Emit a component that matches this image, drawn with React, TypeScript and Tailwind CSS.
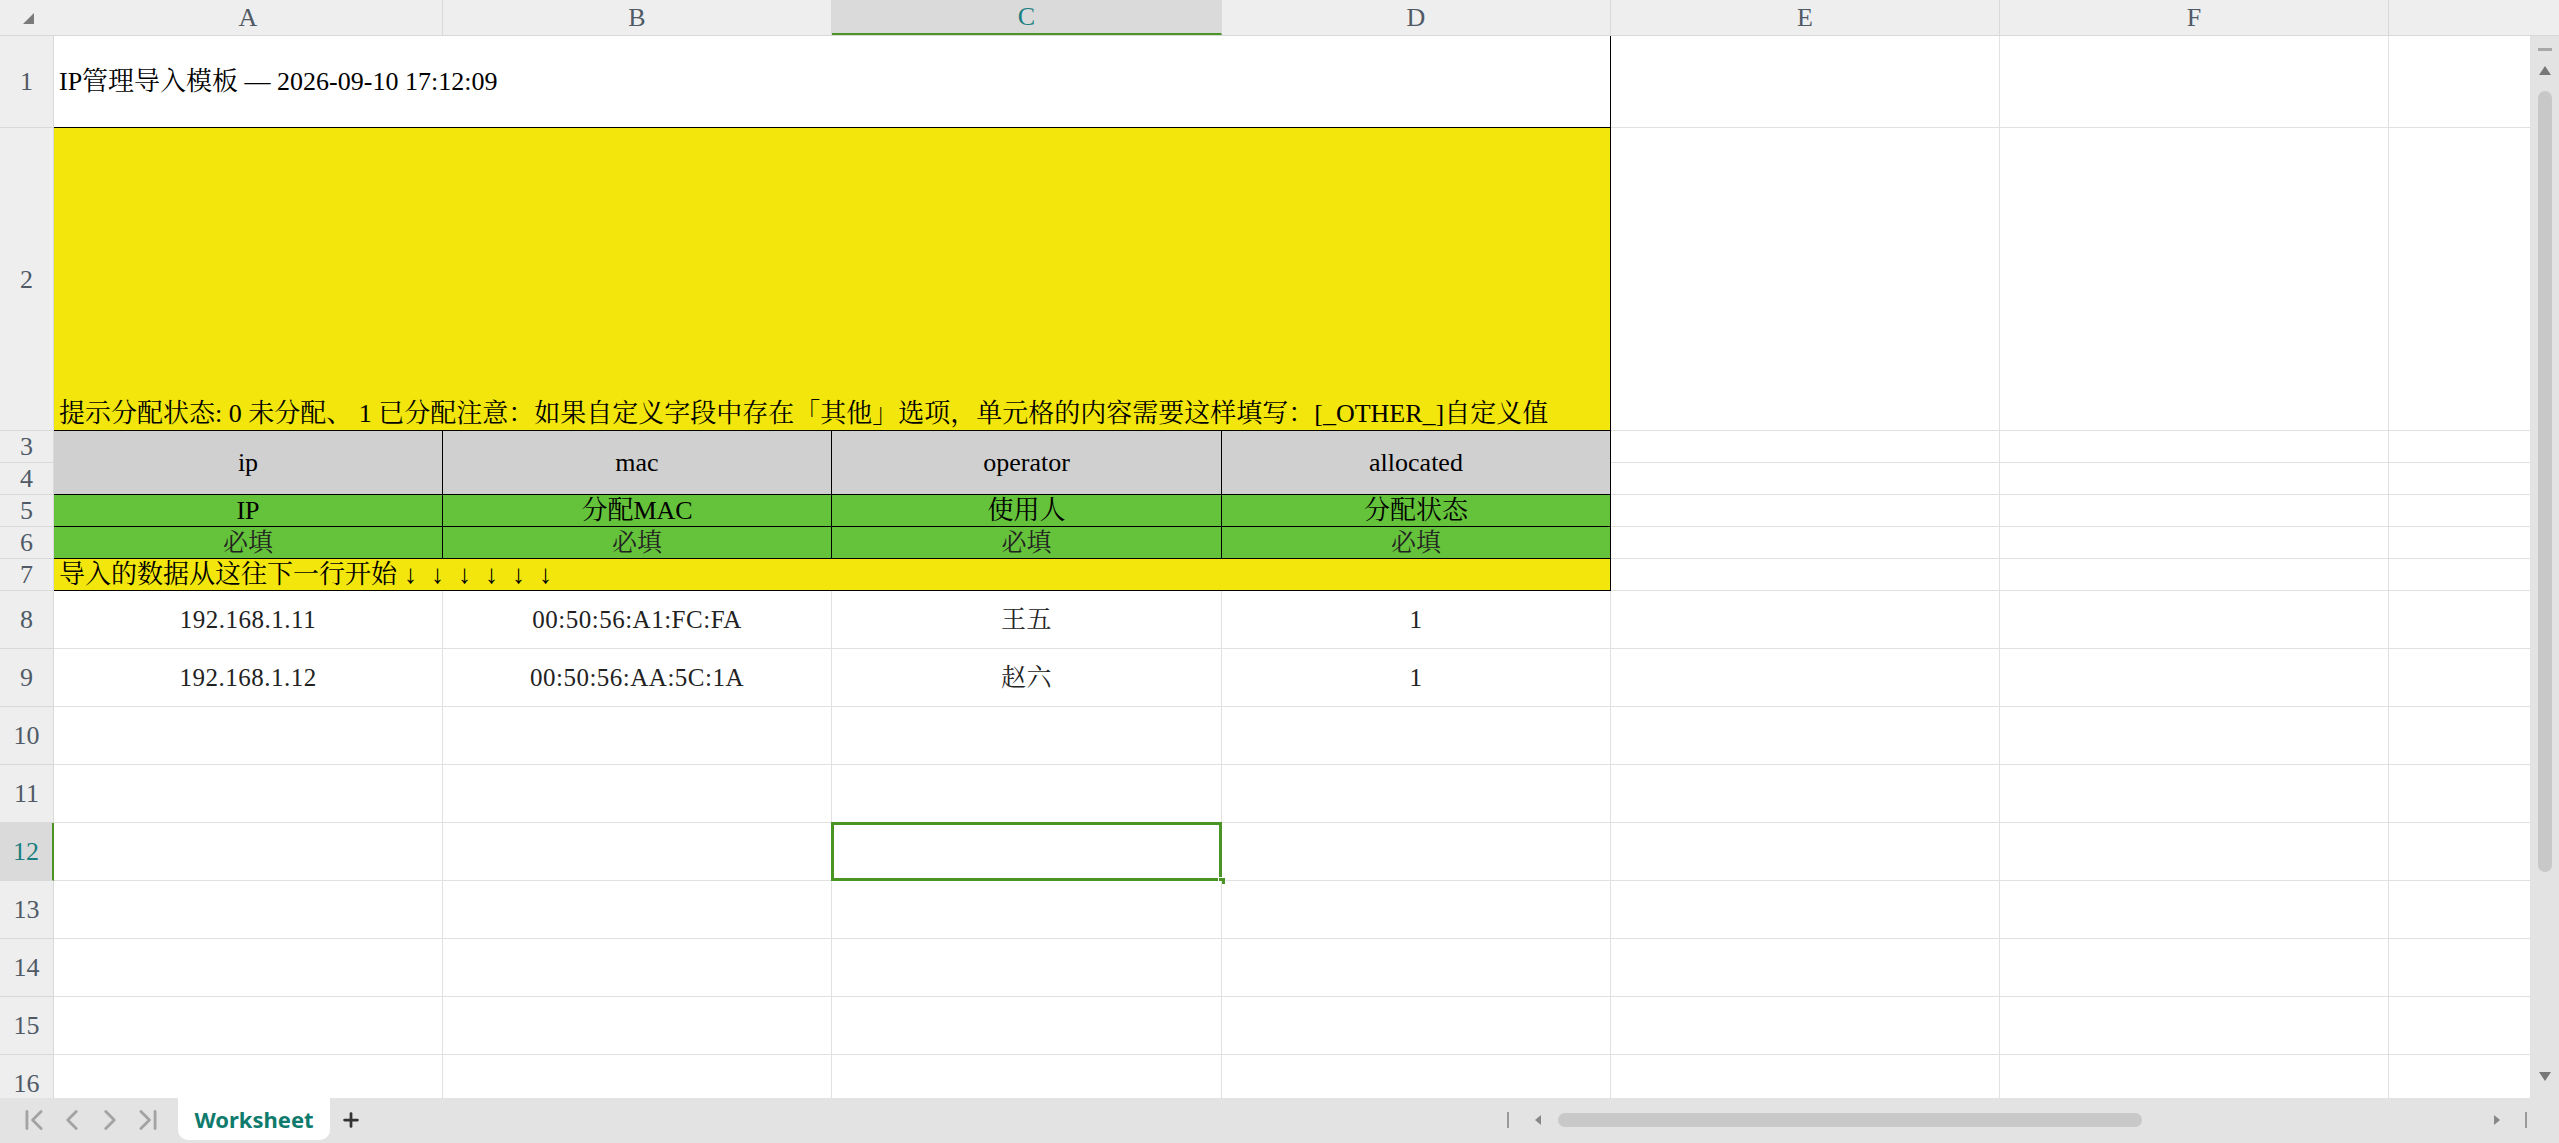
import { ChevronFirst, ChevronLast, ChevronLeft, ChevronRight, Plus } from "lucide-react";

const grid = "border-r border-b border-[#e1e1e1] bg-white";
const blk = "border-r border-b border-black";
const rowHead = "border-r border-b border-[#d9d9d9] bg-[#eeeeee] flex items-center justify-center text-[26px] text-[#505a66]";

const cols = [
  { label: "A", w: "w-[389px]" },
  { label: "B", w: "w-[389px]" },
  { label: "C", w: "w-[390px]", active: true },
  { label: "D", w: "w-[389px]" },
  { label: "E", w: "w-[389px]" },
  { label: "F", w: "w-[389px]" },
];

const fields = [
  { key: "ip", name: "IP" },
  { key: "mac", name: "分配MAC" },
  { key: "operator", name: "使用人" },
  { key: "allocated", name: "分配状态" },
];

const rows = [
  ["192.168.1.11", "00:50:56:A1:FC:FA", "王五", "1"],
  ["192.168.1.12", "00:50:56:AA:5C:1A", "赵六", "1"],
];

function Empty({ n }: { n: number }) {
  return (
    <>
      {Array.from({ length: n }).map((_, i) => (
        <div key={i} className={grid} />
      ))}
    </>
  );
}

function RowNo({ n, active }: { n: number; active?: boolean }) {
  if (active) {
    return (
      <div className="border-r-2 border-b border-r-[#4a9325] border-b-[#d9d9d9] bg-[#dadada] flex items-center justify-center text-[26px] text-[#1a7f80]">
        {n}
      </div>
    );
  }
  return <div className={rowHead}>{n}</div>;
}

export default function App() {
  return (
    <div className="w-[2559px] h-[1143px] overflow-hidden flex flex-col bg-white font-['Liberation_Serif','Noto_Serif_CJK_SC','Noto_Sans_CJK_SC',serif] text-black">
      {/* column headers */}
      <div className="h-[36px] flex bg-[#eeeeee] border-b border-[#d9d9d9] shrink-0">
        <div className="w-[54px] shrink-0 pt-[13px] pl-[23px]">
          <svg width="11" height="11" viewBox="0 0 10 10">
            <polygon points="10,0 10,10 0,10" fill="#7a7a7a" />
          </svg>
        </div>
        {cols.map((c) => (
          <div
            key={c.label}
            className={
              c.active
                ? `${c.w} shrink-0 bg-[#dadada] border-r border-r-[#d9d9d9] border-b-2 border-b-[#4a9325] flex items-center justify-center text-[26px] text-[#1a7f80]`
                : `${c.w} shrink-0 border-r border-[#d9d9d9] flex items-center justify-center text-[26px] text-[#505a66]`
            }
          >
            {c.label}
          </div>
        ))}
        <div className="w-[142px] shrink-0" />
        <div className="flex-1" />
      </div>

      {/* body */}
      <div className="h-[1062px] flex shrink-0">
        <div className="w-[2531px] h-full overflow-hidden">
          <div className="grid grid-cols-[54px_389px_389px_390px_389px_389px_389px_142px] grid-rows-[92px_303px_32px_32px_32px_32px_32px_58px_58px_58px_58px_58px_58px_58px_58px_58px]">
            {/* row 1 */}
            <RowNo n={1} />
            <div className={`${blk} col-span-4 bg-white flex items-center pl-[5px] text-[26px] whitespace-nowrap`}>
              IP管理导入模板 — 2026-09-10 17:12:09
            </div>
            <Empty n={3} />

            {/* row 2 */}
            <RowNo n={2} />
            <div className={`${blk} col-span-4 bg-[#f2e60c] flex items-end pl-[5px] pb-[1px] text-[26px] leading-[30px] whitespace-nowrap overflow-hidden`}>
              提示分配状态: 0 未分配、 1 已分配注意：如果自定义字段中存在「其他」选项，单元格的内容需要这样填写：[_OTHER_]自定义值
            </div>
            <Empty n={3} />

            {/* rows 3-4 */}
            <RowNo n={3} />
            {fields.map((f) => (
              <div key={f.key} className={`${blk} row-span-2 bg-[#d0d0d0] flex items-center justify-center text-[26px]`}>
                {f.key}
              </div>
            ))}
            <Empty n={3} />
            <RowNo n={4} />
            <Empty n={3} />

            {/* row 5 */}
            <RowNo n={5} />
            {fields.map((f) => (
              <div key={f.key} className={`${blk} bg-[#64c23b] flex items-center justify-center text-[26px] leading-none`}>
                {f.name}
              </div>
            ))}
            <Empty n={3} />

            {/* row 6 */}
            <RowNo n={6} />
            {fields.map((f) => (
              <div key={f.key} className={`${blk} bg-[#64c23b] flex items-center justify-center text-[25px] leading-none text-[#222]`}>
                必填
              </div>
            ))}
            <Empty n={3} />

            {/* row 7 */}
            <RowNo n={7} />
            <div className={`${blk} col-span-4 bg-[#f2e60c] flex items-center pl-[5px] text-[26px] leading-none whitespace-nowrap`}>
              导入的数据从这往下一行开始
              {Array.from({ length: 6 }).map((_, i) => (
                <span key={i} className="inline-block w-[27px] text-center">
                  ↓
                </span>
              ))}
            </div>
            <Empty n={3} />

            {/* data rows */}
            {rows.map((r, i) => (
              <div key={i} className="contents">
                <RowNo n={8 + i} />
                {r.map((v, j) => (
                  <div key={j} className={`${grid} flex items-center justify-center text-[25px] text-[#222] tracking-[0.5px]`}>
                    {v}
                  </div>
                ))}
                <Empty n={3} />
              </div>
            ))}

            {/* empty rows 10-16 */}
            {[10, 11, 12, 13, 14, 15, 16].map((n) => (
              <div key={n} className="contents">
                <RowNo n={n} active={n === 12} />
                <div className={grid} />
                <div className={grid} />
                <div className={`${grid} relative`}>
                  {n === 12 && (
                    <>
                      <div className="absolute -left-[1px] -top-[1px] -right-[1px] -bottom-[1px] border-[3px] border-[#4a9325]" />
                      <div className="absolute -right-[5px] -bottom-[5px] w-[8px] h-[8px] bg-[#4a9325] border border-white" />
                    </>
                  )}
                </div>
                <Empty n={4} />
              </div>
            ))}
          </div>
        </div>

        {/* vertical scrollbar */}
        <div className="w-[28px] h-full bg-[#e3e3e3] flex flex-col items-center pt-[12px]">
          <div className="w-[14px] h-[3px] bg-[#a8a8a8]" />
          <svg className="mt-[15px]" width="12" height="9" viewBox="0 0 12 9">
            <polygon points="6,0 12,9 0,9" fill="#777" />
          </svg>
          <div className="mt-[16px] w-[14px] h-[781px] rounded-full bg-[#c8c8c8]" />
          <div className="flex-1" />
          <svg className="mb-[17px]" width="12" height="9" viewBox="0 0 12 9">
            <polygon points="0,0 12,0 6,9" fill="#777" />
          </svg>
        </div>
      </div>

      {/* sheet tabs bar */}
      <div className="h-[45px] flex items-start bg-[#e3e3e3] shrink-0">
        <div className="h-[44px] flex items-center pl-[17px] gap-[4px] text-[#a3a3a3]">
          <div className="w-[34px] flex justify-center">
            <ChevronFirst size={34} strokeWidth={2} />
          </div>
          <div className="w-[34px] flex justify-center">
            <ChevronLeft size={34} strokeWidth={2} />
          </div>
          <div className="w-[34px] flex justify-center">
            <ChevronRight size={34} strokeWidth={2} />
          </div>
          <div className="w-[34px] flex justify-center">
            <ChevronLast size={34} strokeWidth={2} />
          </div>
        </div>
        <div className="ml-[13px] w-[152px] h-[42px] bg-white rounded-b-[10px] flex items-center justify-center font-['Noto_Sans',sans-serif] font-bold text-[22px] text-[#0f7b6c]">
          Worksheet
        </div>
        <div className="w-[42px] h-[44px] flex items-center justify-center text-[#333]">
          <Plus size={22} strokeWidth={3} />
        </div>
        <div className="flex-1" />
        <div className="w-[1059px] h-[44px] flex items-center pr-[32px]">
          <div className="ml-[7px] w-[2px] h-[16px] bg-[#9a9a9a]" />
          <svg className="ml-[26px]" width="6" height="10" viewBox="0 0 6 10">
            <polygon points="6,0 6,10 0,5" fill="#888" />
          </svg>
          <div className="ml-[17px] w-[584px] h-[14px] rounded-full bg-[#c8c8c8]" />
          <div className="flex-1" />
          <svg width="6" height="10" viewBox="0 0 6 10">
            <polygon points="0,0 6,5 0,10" fill="#888" />
          </svg>
          <div className="ml-[25px] w-[2px] h-[16px] bg-[#9a9a9a]" />
        </div>
      </div>
    </div>
  );
}
